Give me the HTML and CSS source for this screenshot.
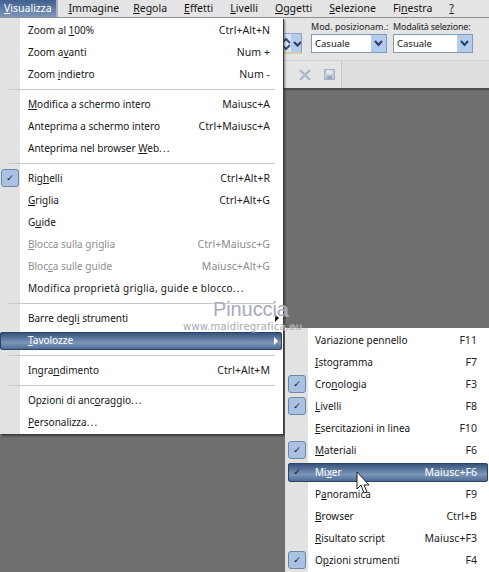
FILE: index.html
```html
<!DOCTYPE html>
<html lang="it">
<head>
    <meta charset="UTF-8">
    <meta name="viewport" content="width=device-width, initial-scale=1.0">
    <title>Visualizza</title>
    <link rel="stylesheet" href="styles.css">
</head>
<body>
    <div class="app">
        <!-- Barra dei menu -->
        <nav class="menubar">
            <span class="top top-active"><u>V</u>isualizza</span>
            <span class="top top-tight"><u>I</u>mmagine</span>
            <span class="top"><u>R</u>egola</span>
            <span class="top"><u>E</u>ffetti</span>
            <span class="top"><u>L</u>ivelli</span>
            <span class="top"><u>O</u>ggetti</span>
            <span class="top"><u>S</u>elezione</span>
            <span class="top">Fi<u>n</u>estra</span>
            <span class="top"><u>?</u></span>
        </nav>

        <!-- Opzioni strumento -->
        <div class="options">
            <div class="spin-box">
                <svg width="18" height="20" viewBox="0 0 18 20"><path d="M-1 8l3-3 4 4M-1 12l3 3 4-4" fill="none" stroke="#34507a" stroke-width="2"/><path d="M10 8l3.5 3.5L17 8" fill="none" stroke="#26406a" stroke-width="2"/></svg>
            </div>
            <div class="field field-a">
                <label>Mod. posizionam.:</label>
                <div class="select"><span>Casuale</span><i><svg width="9" height="7" viewBox="0 0 9 7"><path d="M1 1l3.5 4L8 1" fill="none" stroke="#26406a" stroke-width="2"/></svg></i></div>
            </div>
            <div class="field field-b">
                <label>Modalità selezione:</label>
                <div class="select"><span>Casuale</span><i><svg width="9" height="7" viewBox="0 0 9 7"><path d="M1 1l3.5 4L8 1" fill="none" stroke="#26406a" stroke-width="2"/></svg></i></div>
            </div>
        </div>

        <!-- Barra strumenti -->
        <div class="toolbar">
            <div class="toolbar-box">
                <svg width="12" height="12" viewBox="0 0 12 12"><path d="M1 1l10 10M11 1L1 11" stroke="#a9b6cb" stroke-width="2.4"/></svg>
                <svg width="11" height="11" viewBox="0 0 11 11"><path d="M.5.5h10v10H.5z" fill="#c4ccd9" stroke="#a4afc2"/><path d="M2.5 1h6v4h-6z" fill="#e3e6ec"/><path d="M3 7h5v3H3z" fill="#99a5ba"/></svg>
            </div>
        </div>

        <!-- Menu Visualizza -->
        <div class="menu main-menu">
            <div class="item"><span class="lbl">Zoom al <u>1</u>00%</span><span class="key">Ctrl+Alt+N</span></div>
            <div class="item"><span class="lbl">Zoom a<u>v</u>anti</span><span class="key">Num +</span></div>
            <div class="item"><span class="lbl">Zoom <u>i</u>ndietro</span><span class="key">Num -</span></div>
            <div class="sep"></div>
            <div class="item"><span class="lbl"><u>M</u>odifica a schermo intero</span><span class="key">Maiusc+A</span></div>
            <div class="item"><span class="lbl">Anteprima a schermo intero</span><span class="key">Ctrl+Maiusc+A</span></div>
            <div class="item"><span class="lbl">Anteprima nel browser <u>W</u>eb<span class="dots">...</span></span></div>
            <div class="sep"></div>
            <div class="item checked"><span class="lbl">Rig<u>h</u>elli</span><span class="key">Ctrl+Alt+R</span></div>
            <div class="item"><span class="lbl"><u>G</u>riglia</span><span class="key">Ctrl+Alt+G</span></div>
            <div class="item"><span class="lbl">G<u>u</u>ide</span></div>
            <div class="item off"><span class="lbl"><u>B</u>locca sulla griglia</span><span class="key">Ctrl+Maiusc+G</span></div>
            <div class="item off"><span class="lbl">Bloc<u>c</u>a sulle guide</span><span class="key">Maiusc+Alt+G</span></div>
            <div class="item"><span class="lbl wide">Modifica proprietà griglia, guide e blocco<span class="dots">...</span></span></div>
            <div class="sep"></div>
            <div class="item arrow"><span class="lbl">Barre degl<u>i</u> strumenti</span></div>
            <div class="item hot arrow"><span class="lbl"><u>T</u>avolozze</span></div>
            <div class="sep"></div>
            <div class="item"><span class="lbl">Ingra<u>n</u>dimento</span><span class="key">Ctrl+Alt+M</span></div>
            <div class="sep"></div>
            <div class="item"><span class="lbl">Opzioni di anc<u>o</u>raggio<span class="dots">...</span></span></div>
            <div class="item"><span class="lbl"><u>P</u>ersonalizza<span class="dots">...</span></span></div>
        </div>

        <!-- Sottomenu Tavolozze -->
        <div class="menu sub-menu">
            <div class="item"><span class="lbl">Variazione pennello</span><span class="key">F11</span></div>
            <div class="item"><span class="lbl"><u>I</u>stogramma</span><span class="key">F7</span></div>
            <div class="item checked"><span class="lbl">Cro<u>n</u>ologia</span><span class="key">F3</span></div>
            <div class="item checked"><span class="lbl"><u>L</u>ivelli</span><span class="key">F8</span></div>
            <div class="item"><span class="lbl"><u>E</u>sercitazioni in linea</span><span class="key">F10</span></div>
            <div class="item checked"><span class="lbl"><u>M</u>ateriali</span><span class="key">F6</span></div>
            <div class="item hot checked"><span class="lbl">Mi<u>x</u>er</span><span class="key">Maiusc+F6</span></div>
            <div class="item"><span class="lbl">P<u>a</u>noramica</span><span class="key">F9</span></div>
            <div class="item"><span class="lbl"><u>B</u>rowser</span><span class="key">Ctrl+B</span></div>
            <div class="item"><span class="lbl"><u>R</u>isultato script</span><span class="key">Maiusc+F3</span></div>
            <div class="item checked"><span class="lbl">O<u>p</u>zioni strumenti</span><span class="key">F4</span></div>
        </div>

        <!-- Filigrana -->
        <div class="mark-name">Pinuccia</div>
        <div class="mark-url">www.maidiregrafica.eu</div>

        <svg class="cursor" width="14" height="24" viewBox="0 0 14 24"><path d="M1 1v17l4-4 3 8 3-1-3-7h5z" fill="#fff" stroke="#222" stroke-width="1"/></svg>
    </div>
</body>
</html>
```

FILE: styles.css
```css
html, body {
    margin: 0;
    padding: 0;
}
body {
    font-family: "Noto Sans", Arial, sans-serif;
    font-size: 10.5px;
    color: #111;
    background-color: #6f6f6f;
}
u {
    text-underline-offset: 1px;
}
.app {
    position: relative;
    width: 489px;
    height: 572px;
    overflow: hidden;
}
.menubar {
    display: flex;
    height: 17px;
    background-color: #e4e4e4;
    border-bottom: 1px solid #8e8e8e;
}
.top {
    padding: 0 8.5px;
    line-height: 16px;
    white-space: nowrap;
}
.top-tight {
    padding-right: 5.5px;
}
.top-active {
    width: 52px;
    padding: 0 0 0 4px;
    margin-right: 2px;
    color: #fff;
    background: linear-gradient(#3f5f8c, #7d97b8);
    border-right: 2px solid #a8b2bf;
}
.options {
    position: relative;
    display: flex;
    justify-content: flex-end;
    gap: 6px;
    height: 42px;
    padding-right: 16px;
    box-sizing: border-box;
    background-color: #e4e4e4;
}
.spin-box {
    position: absolute;
    left: 283px;
    top: 15px;
    width: 19px;
    height: 21px;
    overflow: hidden;
    background: linear-gradient(90deg, #d9e4f2 7px, #b4cbec 7px);
    border: 1px solid #8ea5c2;
    border-bottom: 2px solid #d8cfa8;
    box-sizing: border-box;
}
.spin-box svg {
    display: block;
}
.field label {
    display: block;
    box-sizing: border-box;
    height: 16px;
    padding-top: 1px;
    line-height: 15px;
    font-size: 9px;
    white-space: nowrap;
    color: #222;
}
.field-a {
    width: 76px;
}
.field-b {
    width: 80px;
}
.field-b label {
    letter-spacing: -0.2px;
}
.select {
    display: flex;
    justify-content: space-between;
    height: 17px;
    background-color: #fff;
    border: 1px solid #7d9abf;
}
.select span {
    padding-left: 3px;
    font-size: 9.5px;
    line-height: 17px;
}
.select i {
    display: flex;
    align-items: center;
    justify-content: center;
    width: 15px;
    background-color: #b4cbec;
}
.toolbar {
    height: 28px;
    background-color: #dedede;
    border-top: 1px solid #cfcfcf;
    box-sizing: border-box;
    box-shadow: 0 2px 1px #4e4e4e;
}
.toolbar-box {
    display: flex;
    align-items: center;
    gap: 13px;
    box-sizing: border-box;
    width: 342px;
    height: 27px;
    padding-left: 299px;
    background-color: #e4e4e4;
    border-right: 1px solid #c8c8c8;
}
.menu {
    position: absolute;
    box-sizing: border-box;
}
.main-menu {
    left: 0;
    top: 18px;
    width: 283px;
    height: 416px;
    padding: 1px 0 0 20px;
    background: linear-gradient(90deg, #e2e2e2 20px, #fff 20px);
    box-shadow: 1px 1px 0 #3c3c3c, 2px 2px 2px rgba(0, 0, 0, 0.45);
}
.sub-menu {
    left: 285px;
    top: 328px;
    width: 204px;
    height: 244px;
    padding: 1px 0 0 23px;
    background: linear-gradient(90deg, #e2e2e2 23px, #fff 23px);
}
.item {
    position: relative;
    display: flex;
    justify-content: space-between;
    align-items: center;
    box-sizing: border-box;
    height: 22px;
    padding: 0 13px 0 8px;
    color: #151515;
    white-space: nowrap;
}
.sub-menu .item {
    padding: 0 12px 0 7px;
}
.lbl {
    font-size: 10px;
}
.wide {
    letter-spacing: 0.3px;
}
.key {
    color: #222;
    letter-spacing: 0.05px;
}
.dots {
    letter-spacing: 1.2px;
}
.sep {
    height: 1px;
    margin: 4px 8px 3px -12px;
    background-color: #c8c8c8;
}
.hot + .sep {
    margin-top: 5px;
}
.off,
.off .key {
    color: #8d8d8d;
}
.hot {
    margin: 3px 1px 1px -20px;
    padding: 0 13px 2px 28px;
    height: 18px;
    color: #fff;
    background: linear-gradient(#2f4d78, #7c96b8 60%, #466690);
    border-radius: 3px;
    box-shadow: inset 0 0 0 1px #2b4466;
}
.sub-menu .hot {
    margin: 2px 1px 1px -20px;
    height: 19px;
    padding: 0 11px 1px 27px;
}
.hot .key {
    color: #fff;
}
.checked::before {
    content: "\2713";
    position: absolute;
    left: -19px;
    top: 2px;
    box-sizing: border-box;
    width: 18px;
    height: 18px;
    line-height: 16px;
    text-align: center;
    font-family: "DejaVu Sans", sans-serif;
    font-size: 9px;
    font-weight: bold;
    color: #111;
    background-color: #a9c2e4;
    border: 1px solid #6c85a8;
    border-radius: 3px;
}
.sub-menu .checked::before {
    left: -20px;
}
.sub-menu .hot.checked::before {
    left: 0;
    top: 0;
    background: transparent;
    border-color: transparent;
}
.arrow::after {
    content: "";
    position: absolute;
    right: 4px;
    top: 7px;
    border-left: 4px solid #111;
    border-top: 4px solid transparent;
    border-bottom: 4px solid transparent;
}
.hot.arrow::after {
    border-left-color: #fff;
    top: 5px;
}
.mark-name {
    position: absolute;
    left: 213px;
    top: 298px;
    font-family: "Liberation Sans", Arial, sans-serif;
    font-size: 20px;
    letter-spacing: -0.1px;
    color: #a9a9bd;
    text-shadow: 1px 1px 0 rgba(255, 255, 255, 0.5);
}
.mark-url {
    position: absolute;
    left: 183px;
    top: 321px;
    font-family: "DejaVu Sans", sans-serif;
    font-size: 10px;
    letter-spacing: 0.2px;
    color: #a8a8b2;
    text-shadow: 1px 1px 0 rgba(255, 255, 255, 0.4);
}
.cursor {
    position: absolute;
    left: 356px;
    top: 471px;
}
```
